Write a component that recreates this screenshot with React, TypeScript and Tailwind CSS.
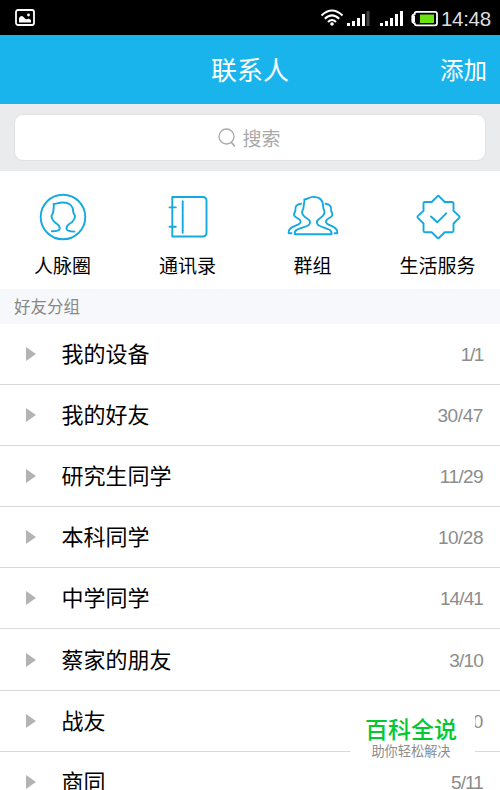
import React from "react";

const groups = [
  { name: "我的设备", count: "1/1", tracking: "tracking-[-1.4px]" },
  { name: "我的好友", count: "30/47", tracking: "tracking-[-0.4px]" },
  { name: "研究生同学", count: "11/29", tracking: "tracking-[-0.6px]" },
  { name: "本科同学", count: "10/28", tracking: "tracking-[-0.5px]" },
  { name: "中学同学", count: "14/41", tracking: "tracking-[-0.9px]" },
  { name: "蔡家的朋友", count: "3/10", tracking: "tracking-[-0.8px]" },
  { name: "战友", count: "0/0", tracking: "tracking-[-0.4px]" },
  { name: "商同", count: "5/11", tracking: "tracking-[-0.9px]" },
];

function Icon({ children }: { children: React.ReactNode }) {
  return (
    <svg className="h-[50px] w-[54px]" viewBox="0 0 54 50" fill="none" stroke="#14a9e1" strokeWidth="1.9" strokeLinecap="round" strokeLinejoin="round">
      {children}
    </svg>
  );
}

const shortcuts = [
  {
    label: "人脉圈",
    icon: (
      <Icon>
        <circle cx="27" cy="25" r="22.3" />
        <path d="M15.800 39.300C21 39.300 23.700 38.800 23.700 36.500C23.700 32.500 21 32.500 18.300 29.800C16.500 28 15.500 26.500 15.500 24.500C15.500 22.500 17.300 22 17.300 19.500C17.300 16.500 18.300 14.500 17.600 12C20.500 12 22 10.500 27 10.500C34 10.500 37.200 14.500 37.200 19.500C37.200 22 39 22.500 39 24.500C39 26.500 38 28 36.200 29.800C33.500 32.500 30.500 32.500 30.500 36.500C30.500 38.800 34 39.600 38.500 39.600" />
      </Icon>
    ),
  },
  {
    label: "通讯录",
    icon: (
      <Icon>
        <path d="M11.300 5H42a3.500 3.500 0 0 1 3.500 3.500v32.500A3.500 3.500 0 0 1 42 44.500H11.300zM21.700 9.300v31.400M8.500 15.400h6.300M8.500 34.700h6.300" />
      </Icon>
    ),
  },
  {
    label: "群组",
    icon: (
      <Icon>
        <path d="M8.800 42.300C8.500 40 9 38.500 11.500 37.500C15 36 19 35 22 33.500C24.200 32.300 24.400 30 23.500 28.500C22 26.200 16.500 25 16.100 20.500C15.900 18.300 17.700 17.500 17.600 14.500C17.500 12 19 10.500 18.300 7.500C21.500 7.500 22.500 4.900 27.300 4.900C34 4.900 37.200 9 37.200 15C37.200 17.500 38.700 18 38.500 20.500C38.100 25 32.700 26.200 31.400 28.500C30.500 30 30.700 32.300 32.900 33.500C35.500 35 39.500 36 43 37.500C45.300 38.500 45.800 40 45.500 42.300z" />
        <path d="M15 11.800C11 12 8.900 14.500 9.400 18C9.600 20 7.900 20.500 8.100 22.800C8.400 25.500 12 25.800 14 28C15.200 29.400 14.500 31.300 12.500 32.300C9.500 33.800 6.500 34.500 4.300 36.500C2.700 38 2.300 39.300 2.600 41.200H5.500M39.500 11.800C43.500 12 45.600 14.500 45.100 18C44.900 20 46.600 20.500 46.400 22.800C46.100 25.500 42.500 25.800 40.500 28C39.300 29.400 40 31.300 42 32.300C45 33.800 47.500 34.500 49.700 36.500C51.300 38 51.700 39.300 51.400 41.200H48.500" />
      </Icon>
    ),
  },
  {
    label: "生活服务",
    icon: (
      <Icon>
        <path d="M26.300 4.300a1.300 1.300 0 0 1 1.800 0L33.700 10H41a1.500 1.500 0 0 1 1.500 1.500v7.300l5.700 5.300a1.300 1.300 0 0 1 0 1.800L42.500 31.500v7.300A1.500 1.500 0 0 1 41 40.300h-7.300l-5.600 5.500a1.300 1.300 0 0 1-1.800 0L20.700 40.300H14a1.500 1.500 0 0 1-1.500-1.500v-7.300L6.800 25.900a1.300 1.300 0 0 1 0-1.800L12.500 18.800v-7.300A1.500 1.500 0 0 1 14 10h6.700z" />
        <path d="m20 24.500 6.200 5.800 9-9" />
      </Icon>
    ),
  },
];

function StatusBar() {
  return (
    <div className="flex h-[35px] shrink-0 items-center bg-black pl-[15px] pr-2 text-white">
      <svg className="h-5 w-5" viewBox="0 0 20 20">
        <rect x="1" y="2" width="18" height="15" rx="2" fill="none" stroke="white" strokeWidth="1.800" />
        <path d="M4 14.500V10q2-3 4-1.500L10.500 11q2 .5 3-.5l2.500 1.500v2.500z" fill="white" />
        <circle cx="13.500" cy="7" r="1.400" fill="white" />
      </svg>
      <svg className="mb-px ml-auto h-[22px] w-[118px]" viewBox="0 0 118 22">
        <g fill="none" stroke="white" strokeWidth="2.100">
          <path d="M1.500 9.500Q12 -.5 22.500 9.500M4.800 12.800Q12 6 19.200 12.800M8 16Q12 12 16 16" />
        </g>
        <circle cx="12" cy="18" r="1.800" fill="white" />
        <g fill="white">
          <path d="M27 17h3v3h-3zM32 15h3v5h-3zM37 12h3v8h-3zM42 8h3v12h-3zM60 17h3v3h-3zM65 15h3v5h-3zM70 12h3v8h-3zM75 8h3v12h-3zM80 5h3v15h-3z" />
        </g>
        <path d="M46.500 5h3v15h-3z" fill="#444" />
        <path d="M96.500 5.800H115a2 2 0 0 1 2 2v9.500a2 2 0 0 1-2 2H96.500q-1.800 0-1.800-2-2.400-.5-2.400-2.300v-4.500q0-1.800 2.400-2.500 0-2.200 1.800-2.200z" fill="none" stroke="white" strokeWidth="1.800" />
        <path d="M92 9.500h3v6.500H92z" fill="white" />
        <rect x="100" y="8.500" width="14" height="8.500" fill="#6be512" />
      </svg>
      <span className="ml-[3px] mt-[3px] w-[51px] text-[20.500px] leading-none tracking-[-0.3px] text-[#dedede]">14:48</span>
    </div>
  );
}

export default function App() {
  return (
    <div className="relative flex h-[790px] w-[500px] flex-col overflow-hidden bg-white font-['Liberation_Sans','Noto_Sans_CJK_SC',sans-serif]">
      <StatusBar />
      <header className="grid h-[69px] shrink-0 grid-cols-3 items-center bg-[#1ab4ed] px-[13px] pt-[3px] text-white">
        <span />
        <h1 className="text-center text-[26px] leading-none">联系人</h1>
        <button className="pt-px text-right text-[23.500px] leading-none">添加</button>
      </header>
      <div className="h-[67px] shrink-0 bg-[#e9ebed] px-3.5 pt-[10px]">
        <div className="flex h-[47px] items-center justify-center gap-[6px] rounded-[9px] border border-[#e0e2e3] bg-white pr-[1px] text-[#aaa]">
          <svg className="h-5 w-[18px]" viewBox="0 0 18 20" fill="none" stroke="currentColor" strokeWidth="1.300">
            <circle cx="8.500" cy="8.500" r="7.500" />
            <path d="m13 14 4 4.500" strokeWidth="1.700" />
          </svg>
          <span className="mt-[3px] text-[19px] leading-none">搜索</span>
        </div>
      </div>
      <nav className="grid h-[118px] shrink-0 grid-cols-4 pt-[21px]">
        {shortcuts.map((s) => (
          <div key={s.label} className="flex flex-col items-center">
            {s.icon}
            <span className="mt-[15px] text-[19px] leading-5 text-black">{s.label}</span>
          </div>
        ))}
      </nav>
      <div className="flex h-[35px] shrink-0 items-center bg-[#f7f8fb] pt-px pl-3.5 text-[16.500px] leading-none text-[#888]">好友分组</div>
      <ul>
        {groups.map((g) => (
          <li key={g.name} className="flex h-[61.100px] items-center border-b border-[#d9d9d9] pr-[17px] pl-[26px]">
            <svg className="h-3.5 w-2.5" viewBox="0 0 10 14">
              <path d="M0 0 10 7 0 14z" fill="#b3b3b3" />
            </svg>
            <span className="mt-[2px] ml-[25.500px] text-[22px] leading-none text-black">{g.name}</span>
            <span className={"mt-px ml-auto text-[19px] leading-none text-[#8c8c8c] " + g.tracking}>{g.count}</span>
          </li>
        ))}
      </ul>
      <div className="absolute top-[704px] left-[350px] flex h-[66px] w-[125px] flex-col items-center bg-white pt-[14px] pr-[3px]">
        <span className="text-[23px] leading-6 font-medium text-[#00c931]">百科全说</span>
        <span className="mt-[2px] text-[13.200px] leading-4 text-[#8c8c8c]">助你轻松解决</span>
      </div>
    </div>
  );
}
